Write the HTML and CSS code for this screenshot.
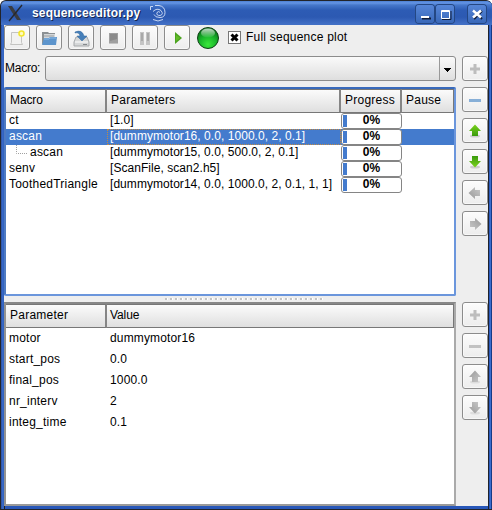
FILE: index.html
```html
<!DOCTYPE html>
<html lang="en">
<head>
<meta charset="utf-8">
<title>sequenceeditor.py</title>
<link rel="stylesheet" href="styles.css">
</head>
<body>
<svg width="0" height="0" class="defs">
  <defs>
    <linearGradient id="green" x2="0" y2="1"><stop stop-color="#7bd21e"/><stop offset="1" stop-color="#399a0c"/></linearGradient>
    <linearGradient id="gray" x2="1" y2="1"><stop stop-color="#999"/><stop offset="1" stop-color="#c9c9c9"/></linearGradient>
    <radialGradient id="ball" cx=".5" cy=".8" r=".75"><stop stop-color="#3be83b"/><stop offset=".55" stop-color="#18b42a"/><stop offset="1" stop-color="#087018"/></radialGradient>
    <linearGradient id="shine" x2="0" y2="1"><stop stop-color="#fff" stop-opacity=".75"/><stop offset="1" stop-color="#fff" stop-opacity=".05"/></linearGradient>
    <path id="up" d="M8 1.500 14 8h-3v5H5V8H2z"/>
    <path id="plus" d="M6.500 3h3v3.500H13v3H9.500V13h-3V9.500H3v-3h3.500z"/>
  </defs>
</svg>
<div class="window">
  <header class="titlebar">
    <svg class="xlogo" width="16" height="18" viewBox="0 0 16 18"><path d="M1 2 5 2 14 16 10 16z" fill="#393b40"/><path d="M15 1 2 17" stroke="#26282e" stroke-width="1.300"/></svg>
    <span class="title">sequenceeditor.py</span>
    <svg class="swirl" width="18" height="18" viewBox="0 0 18 18" fill="none" stroke="#d7e3f8" stroke-width=".9"><path d="M1.500 6V2.500H4M6 1.500h4q6 1 6 7 0 5-5 5-5 0-6-3M4 7.500q4-4 8-1 3 4-1 5-4 0-3-3 2-2 3 0M4 15.500q5 3 10 0"/></svg>
    <div class="controls">
      <span class="control"><svg width="18" height="18"><path d="M6 13.500h9" stroke="#101c38" stroke-width="2"/><path d="M5 12h8" stroke="#fff" stroke-width="2"/></svg></span>
      <span class="control"><svg width="18" height="18"><path d="M6 14.500h9V6" fill="none" stroke="#101c38"/><path d="M5.500 5.500h8v8h-8zM5 6.500h9" fill="none" stroke="#fff"/></svg></span>
      <span class="control close"><svg width="18" height="18"><path d="m6 6 8 8m0-8-8 8" stroke="#101c38" stroke-width="2"/><path d="m5 5.500 8 7m0-7-8 7" stroke="#fff" stroke-width="2.500"/></svg></span>
    </div>
  </header>
  <main class="content">
    <div class="toolbar">
      <button class="btn"><svg width="18" height="18"><path d="M3.500 3.500h10v10l1 2h-12l1-2z" fill="#f2f2f1" stroke="#c4c4c2"/><circle cx="13.500" cy="4.500" r="2.500" fill="#fffbc0" stroke="#f3e52f" stroke-width="1.600"/></svg></button>
      <button class="btn"><svg width="18" height="18"><path d="M2 15V3h6l1 1h6v8" fill="#8c9194"/><path d="M4 5h11v5H4z" fill="#d4d7d9"/><path d="M4 7h10" stroke="#999ea1"/><path d="M4 9h5l1-1h7l-1 8H2z" fill="#5c94cc"/><path d="M4 10h5l1-1h6" fill="none" stroke="#8bb9e5"/></svg></button>
      <button class="btn"><svg width="18" height="18"><path d="m4 8-2 5v4h15v-4l-2-5z" fill="#d5d7d8" stroke="#a6a9ab"/><path d="M3 13h13" stroke="#fff"/><path d="M11 15.500h4" stroke="#85898c"/><path d="M3 3q7-3 9 4h3l-5 5-5-5h3Q7 3 3 4z" fill="#467fb9" stroke="#32699f" stroke-width=".5"/></svg></button>
      <button class="btn"><svg width="18" height="18"><path d="M5 4h9v10H5z" fill="#a0a0a0"/><path d="M6 5h7v5l-7 2z" fill="#8b8b8b"/><path d="M5 14.500h9" stroke="#c4c4c4"/></svg></button>
      <button class="btn"><svg width="18" height="18"><path d="M4 3h4v13H4zM10 3h4v13h-4z" fill="#c5c5c5"/><path d="M5 4h2v8H5zM11 4h2v8h-2z" fill="#a9a9a9"/></svg></button>
      <button class="btn"><svg width="18" height="18"><path d="M7 3 14 9l-7 6z" fill="#4ba31f"/><path d="M8 6v6l4-3z" fill="#62bb27"/></svg></button>
      <svg class="lamp" width="24" height="24"><circle cx="12" cy="12" r="10.500" fill="url(#ball)" stroke="#104017"/><ellipse cx="12" cy="7" rx="7" ry="4.500" fill="url(#shine)"/></svg>
      <span class="check"><svg width="11" height="11"><path d="m2.500 2.500 6 6m0-6-6 6" stroke="#000" stroke-width="3"/></svg></span>
      <span class="check-label">Full sequence plot</span>
    </div>
    <div class="columns">
      <div class="main">
        <div class="macro-line"><span class="macro-label">Macro:</span><div class="combo"><span class="drop"><svg width="15" height="23"><path d="M4 11h7v1h-1v1H9v1H8v1H7v-1H6v-1H5v-1H4z"/></svg></span></div></div>
        <section class="table sequence">
          <div class="row head"><span class="tight">Macro</span><span>Parameters</span><span>Progress</span><span>Pause</span></div>
          <div class="row"><span>ct</span><span>[1.0]</span><b class="bar">0%</b><span></span></div>
          <div class="row selected"><span>ascan</span><span class="focus">[dummymotor16, 0.0, 1000.0, 2, 0.1]</span><b class="bar">0%</b><span></span></div>
          <div class="row"><span class="child"><svg width="14" height="16"><path d="M2.500 0v8.500H13" fill="none" stroke="#a0a0a0" stroke-dasharray="1 1"/></svg>ascan</span><span>[dummymotor15, 0.0, 500.0, 2, 0.1]</span><b class="bar">0%</b><span></span></div>
          <div class="row"><span>senv</span><span>[ScanFile, scan2.h5]</span><b class="bar">0%</b><span></span></div>
          <div class="row"><span>ToothedTriangle</span><span>[dummymotor14, 0.0, 1000.0, 2, 0.1, 1, 1]</span><b class="bar">0%</b><span></span></div>
        </section>
        <div class="splitter"></div>
        <section class="table params">
          <div class="row head"><span>Parameter</span><span class="tight">Value</span></div>
          <div class="row"><span>motor</span><span>dummymotor16</span></div>
          <div class="row"><span>start_pos</span><span>0.0</span></div>
          <div class="row"><span>final_pos</span><span>1000.0</span></div>
          <div class="row"><span>nr_interv</span><span>2</span></div>
          <div class="row"><span>integ_time</span><span>0.1</span></div>
        </section>
      </div>
      <aside class="side">
        <div class="stack upper">
          <button class="btn"><svg width="16" height="16"><use href="#plus" fill="#bdbdbd"/></svg></button>
          <button class="btn"><svg width="16" height="16"><path d="M2 7h12v3H2z" fill="#87afd7"/></svg></button>
          <button class="btn"><svg width="16" height="16"><ellipse cx="8" cy="13" rx="5" ry="1.500" fill="#ccc"/><use href="#up" fill="url(#green)"/></svg></button>
          <button class="btn"><svg width="16" height="16"><ellipse cx="8" cy="13" rx="5" ry="1.500" fill="#ccc"/><use href="#up" transform="matrix(1 0 0 -1 0 15)" fill="url(#green)"/></svg></button>
          <button class="btn"><svg width="16" height="16"><use href="#up" transform="rotate(-90 8 8)" fill="url(#gray)"/></svg></button>
          <button class="btn"><svg width="16" height="16"><use href="#up" transform="rotate(90 8 8)" fill="url(#gray)"/></svg></button>
        </div>
        <div class="stack">
          <button class="btn"><svg width="16" height="16"><use href="#plus" fill="#bdbdbd"/></svg></button>
          <button class="btn"><svg width="16" height="16"><path d="M2 7h12v3H2z" fill="#c2c2c2"/></svg></button>
          <button class="btn"><svg width="16" height="16"><ellipse cx="8" cy="13" rx="5" ry="1.500" fill="#ddd"/><use href="#up" fill="url(#gray)"/></svg></button>
          <button class="btn"><svg width="16" height="16"><ellipse cx="8" cy="13" rx="5" ry="1.500" fill="#ddd"/><use href="#up" transform="matrix(1 0 0 -1 0 15)" fill="url(#gray)"/></svg></button>
        </div>
      </aside>
    </div>
  </main>
</div>
</body>
</html>
```
FILE: styles.css
```css
* { box-sizing: border-box; }
body { margin: 0; width: 492px; height: 510px; overflow: hidden; background: #fff; color: #000; font: 12px/16px "Liberation Sans", sans-serif; letter-spacing: .22px; }
svg { display: block; flex: none; }
.defs { position: absolute; }
.window { width: 492px; height: 510px; background: linear-gradient(90deg, #2a4f9e, #3c6fd2 2px, #2957ae 3px, #20232c 3px, #20232c 4px, transparent 4px, transparent 487px, #20232c 487px, #20232c 488px, #2352b4 488px, #4476d6 490px, #173a86 490px), #2857b8; border: 1px solid #22242a; border-width: 1px 0 1px 1px; border-radius: 6px 6px 0 0; display: flex; flex-direction: column; overflow: hidden; }
.titlebar { height: 24px; flex: none; display: flex; align-items: center; padding: 0 6px 0 6px; background: linear-gradient(#4b80d2, #6595e5 2px, #4678cb 4px, #2d5cb5 9px, #2c59b2 16px, #416fc5 23px); }
.title { margin-left: 9px; font-size: 12px; font-weight: bold; color: #fff; letter-spacing: .17px; text-shadow: 1px 1px #14264d; }
.swirl { margin-left: 9px; }
.controls { display: flex; gap: 2px; margin-left: auto; padding-top: 1px; }
.control { width: 18px; height: 18px; border-radius: 3px; background: linear-gradient(#5686d8, #3968b9); box-shadow: 0 0 0 1px #244783; }
.control.close { margin-left: 12px; }
.content { height: 481px; margin: 0 4px 0 3px; background: #eee; display: flex; flex-direction: column; flex: none; }
.btn { width: 26px; height: 25px; padding: 0; display: flex; align-items: center; justify-content: center; border: 1px solid #8c8c8c; border-radius: 3px; background: linear-gradient(#fcfcfc, #ededed); box-shadow: inset 0 0 0 1px #fff8; flex: none; }
.toolbar { display: flex; align-items: center; height: 25px; gap: 6px; }
.check { width: 13px; height: 13px; border: 1px solid #777; background: #fff; margin-left: 2px; }
.check-label { margin-left: -1px; line-height: 14px; padding-bottom: 2px; }
.columns { display: flex; gap: 6px; padding-top: 6px; }
.main { width: 452px; }
.macro-line { display: flex; align-items: center; height: 25px; }
.macro-label { width: 41px; padding: 0 0 2px 1px; letter-spacing: -.25px; }
.combo { width: 411px; height: 25px; border: 1px solid #8c8c8c; border-radius: 3px; background: linear-gradient(#fafafa, #dedede); display: flex; justify-content: flex-end; }
.drop { width: 16px; border-left: 1px solid #999; }
.table { background: #fff; border: 2px solid #6088cb; }
.sequence { height: 209px; margin-top: 6px; border-radius: 2px; border-color: #396abb #6b96dc #6b96dc #4e7ac2; }
.row { display: grid; grid-template-columns: 101px 234px 61px 1fr; height: 16px; white-space: pre; }
.sequence .row:not(.head) { line-height: 14px; }
.row > span { padding-left: 3px; }
.sequence .row:not(.head) > span + span { letter-spacing: .05px; }
.head { height: 24px; line-height: 21px; border-right: 1px solid #777; }
.row.head > span { padding-left: 4px; border: 1px solid #777; border-width: 1px 1px 1px 0; border-right: 2px solid #858585; background: linear-gradient(#fbfbfb, #dfdfdf); letter-spacing: .25px; }
.row.head > .tight { letter-spacing: -.1px; }
.row.head > span:last-child { border-right: 0; }
.selected { background: #447bcd; color: #fff; }
.focus { outline: 1px dotted #c38b43; outline-offset: -1px; }
.child { display: flex; }
.row > .child { padding-left: 8px; }
.row .child svg { margin-right: 2px; }
.row > .bar { border: 1px solid #858585; border-radius: 3px; background: linear-gradient(#447bcd, #447bcd) 1px 1px / 4px 12px no-repeat #fff; color: #000; text-align: center; line-height: 12px; letter-spacing: 0; }
.splitter { height: 6px; width: 159px; margin-left: 161px; background: linear-gradient(90deg, #c4c4c4 2px, #fff 2px, #fff 3px, transparent 3px) 0 2px / 5px 2px repeat-x; }
.params { height: 204px; border-color: #888 #aaa #999 #929292; }
.params .row { grid-template-columns: 101px 1fr; height: 21px; line-height: 21px; }
.params .row:not(.head) > span + span { letter-spacing: .14px; }
.params .row.head { height: 24px; }
.params .row.head > .tight { padding-left: 3px; }
.side { display: flex; flex-direction: column; gap: 66px; }
.stack { display: flex; flex-direction: column; gap: 6px; }
```
